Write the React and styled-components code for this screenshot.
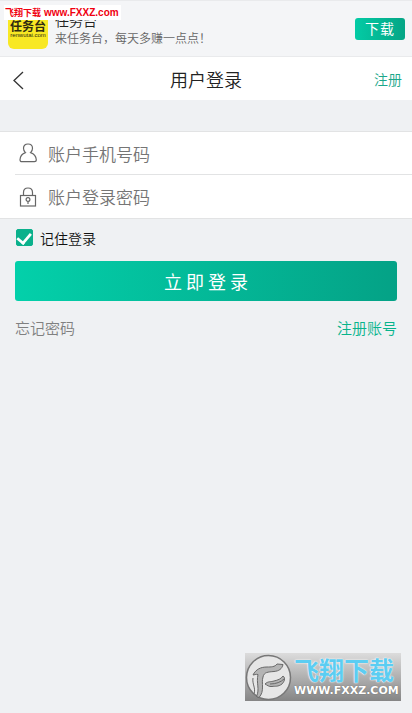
import React, { useState } from "react";
import styled, { createGlobalStyle } from "styled-components";

const App = () => {
  const [phone, setPhone] = useState("");
  const [password, setPassword] = useState("");
  const [remember, setRemember] = useState(true);

  return (
    <>
      <GlobalStyle />
      <Page>
        <Banner>
          <AppLogo>
            <LogoName>任务台</LogoName>
            <LogoUrl>renwutai.com</LogoUrl>
          </AppLogo>
          <BannerText>
            <BannerTitle>任务台</BannerTitle>
            <BannerDesc>来任务台，每天多赚一点点！</BannerDesc>
          </BannerText>
          <DownloadBtn type="button">下载</DownloadBtn>
          <SiteTag>
            <TagName>飞翔下载</TagName>
            <TagUrl>www.FXXZ.com</TagUrl>
          </SiteTag>
        </Banner>

        <Header>
          <BackBtn type="button" aria-label="返回">
            <svg width="12" height="22" viewBox="0 0 12 22" fill="none">
              <path d="M11 4 2 12.500l9 8.500" stroke="#333" strokeWidth="1.300" />
            </svg>
          </BackBtn>
          <Title>用户登录</Title>
          <HeaderLink href="#register">注册</HeaderLink>
        </Header>

        <form onSubmit={(e) => e.preventDefault()}>
          <Fields>
            <Field>
              <UserIcon />
              <Input
                type="tel"
                aria-label="账户手机号码"
                placeholder="账户手机号码"
                value={phone}
                onChange={(e) => setPhone(e.target.value)}
              />
            </Field>
            <Field>
              <LockIcon />
              <Input
                type="password"
                aria-label="账户登录密码"
                placeholder="账户登录密码"
                value={password}
                onChange={(e) => setPassword(e.target.value)}
              />
            </Field>
          </Fields>
          <Actions>
            <Remember>
              <Checkbox
                type="checkbox"
                checked={remember}
                onChange={(e) => setRemember(e.target.checked)}
              />
              记住登录
            </Remember>
            <SubmitBtn type="submit">立即登录</SubmitBtn>
            <Links>
              <TextLink href="#forgot" $color="#808080">忘记密码</TextLink>
              <TextLink href="#register" $color="#07b48c">注册账号</TextLink>
            </Links>
          </Actions>
        </form>

        <Watermark>
          <BirdLogo />
          <MarkText>
            <MarkName>飞翔下载</MarkName>
            <MarkUrl>WWW.FXXZ.COM</MarkUrl>
          </MarkText>
        </Watermark>
      </Page>
    </>
  );
};

export default App;

const UserIcon = () => (
  <svg width="20" height="20" viewBox="0 0 20 20" fill="none" stroke="#666" strokeWidth="1.2">
    <path d="M7.4 9.6C6 8.4 5.5 7 5.5 5.3 5.5 2.7 7.4 1 10 1s4.5 1.7 4.5 4.3c0 1.7-.5 3.1-1.900 4.300 3.800 1.300 5.500 3.900 5.700 7.200 0 1.300-.7 1.900-1.900 1.900H3.900c-1.200 0-1.900-.6-1.900-1.900.2-3.300 1.600-5.900 5.400-7.200Z" />
  </svg>
);

const LockIcon = () => (
  <svg width="20" height="20" viewBox="0 0 20 20" fill="none" stroke="#666" strokeWidth="1.2">
    <rect x="2.5" y="8.5" width="15" height="10.5" />
    <path d="M5.500 8.500V5.500C5.500 2.800 7.300 1 10 1s4.500 1.800 4.500 4.500v3" />
    <circle cx="10" cy="12.500" r="1.900" />
    <path d="M10 14.400v2.600" />
  </svg>
);

const BirdLogo = () => (
  <svg width="47" height="47" viewBox="0 0 47 47">
    <circle cx="23.5" cy="23.5" r="22" fill="#e6e6e6" stroke="#777" strokeWidth="1.5" />
    <g fill="#b4b4b4" stroke="#686868" strokeWidth="1" strokeLinejoin="round">
      <path d="M8 21C11 15 16 13 22 13C26 13 30 13 32 10L38 10.500C37 15 34 17 29 17.500C23 18 19 18 18 23C16 29 20 37 14 43.500L11.500 42.500C15 35 11 29 13 20.500C11 20 9 21 8 21Z" />
      <path d="M8 24C7 30 11 34 9 40" fill="none" />
      <path d="M20 30C23 27 26 28 29 27C33 26 36 25 38 22C41 24 39 28 37 30C33 33 30 32 27 32.500C24 33 22 31 20 30Z" />
      <path d="M25 30C31 30 36 28 39 25" fill="none" />
    </g>
  </svg>
);

const GlobalStyle = createGlobalStyle`
  * {
    box-sizing: border-box;
  }
  body {
    margin: 0;
    background: #eff1f3;
    font-family: "Noto Sans CJK SC", sans-serif;
    font-weight: 350;
  }
  button, input {
    font-family: inherit;
    font-weight: inherit;
  }
  a {
    text-decoration: none;
  }
`;

const Page = styled.main`
  position: relative;
  min-height: 100vh;
`;

const Banner = styled.section`
  position: relative;
  display: flex;
  align-items: center;
  height: 57px;
  padding: 0 7px 0 8px;
  background: #f4f5f7;
  border: solid #e9eaec;
  border-width: 1px 0;
`;

const AppLogo = styled.div`
  display: flex;
  flex-direction: column;
  align-items: center;
  justify-content: center;
  width: 40px;
  height: 40px;
  margin-right: 7px;
  border-radius: 6px;
  background: #f8e824;
  color: #2f2b10;
`;

const LogoName = styled.span`
  font-size: 12px;
  font-weight: 700;
  line-height: 12px;
`;

const LogoUrl = styled.span`
  font-family: "Liberation Sans", sans-serif;
  font-size: 6px;
  line-height: 6px;
`;

const BannerText = styled.div`
  flex: 1;
`;

const BannerTitle = styled.div`
  color: #222;
  font-size: 14px;
  line-height: 18px;
`;

const BannerDesc = styled.div`
  color: #666;
  font-size: 12px;
  line-height: 18px;
`;

const DownloadBtn = styled.button`
  width: 50px;
  height: 22px;
  padding: 0 0 2px;
  border: 0;
  border-radius: 3px;
  background: linear-gradient(to right, #03cba5, #05a585);
  color: #fff;
  font-size: 14px;
  font-weight: 400;
  line-height: 20px;
  letter-spacing: 1px;
`;

const SiteTag = styled.div`
  position: absolute;
  top: 4px;
  left: 4px;
  display: flex;
  align-items: center;
  gap: 3px;
  height: 15px;
  padding: 0 2px 0 1px;
  background: #fff;
  color: #f00010;
  font-weight: 700;
`;

const TagName = styled.span`
  font-size: 9px;
`;

const TagUrl = styled.span`
  font-family: "Liberation Sans", sans-serif;
  font-size: 10px;
`;

const Header = styled.header`
  display: grid;
  grid-template-columns: 60px 1fr 60px;
  align-items: center;
  height: 43px;
  background: #fff;
`;

const BackBtn = styled.button`
  display: flex;
  padding: 4px 12px;
  border: 0;
  background: none;
`;

const Title = styled.h1`
  margin: 0;
  color: #222;
  font-size: 18px;
  font-weight: 350;
  text-align: center;
`;

const HeaderLink = styled.a`
  padding-right: 10px;
  color: #1ba78a;
  font-size: 14px;
  text-align: right;
`;

const Fields = styled.div`
  margin-top: 31px;
  padding-left: 15px;
  border: solid #e2e3e4;
  border-width: 1px 0;
  background: #fff;
`;

const Field = styled.div`
  display: flex;
  align-items: center;
  gap: 10px;
  height: 43px;
  padding-left: 3px;

  &:not(:last-child) {
    border-bottom: 1px solid #e2e3e4;
  }
`;

const Input = styled.input`
  flex: 1;
  min-width: 0;
  height: 40px;
  padding: 0;
  border: 0;
  outline: 0;
  background: none;
  color: #333;
  font-size: 17px;

  &::placeholder {
    color: #757575;
  }
`;

const Actions = styled.div`
  padding: 0 15px;
`;

const Remember = styled.label`
  display: flex;
  align-items: center;
  gap: 7px;
  height: 37px;
  color: #111;
  font-size: 14px;
`;

const Checkbox = styled.input`
  appearance: none;
  width: 17px;
  height: 17px;
  margin: 0 0 0 1px;
  border: 1px solid #0bb18c;
  border-radius: 2px;
  background: #fff;

  &:checked {
    background: #0bb18c;
  }
  &:checked::after {
    content: "";
    display: block;
    width: 7px;
    height: 12px;
    margin: 0 auto;
    border: solid #fff;
    border-width: 0 3px 3px 0;
    transform: rotate(40deg) scale(0.9);
    transform-origin: 50% 40%;
  }
`;

const SubmitBtn = styled.button`
  display: block;
  width: 100%;
  height: 40px;
  margin-top: 5px;
  padding: 0 0 0 4px;
  border: 0;
  border-radius: 3px;
  background: linear-gradient(to right, #03d0aa, #04a286);
  color: #fff;
  font-size: 18px;
  font-weight: 400;
  letter-spacing: 4px;
`;

const Links = styled.div`
  display: flex;
  justify-content: space-between;
  margin-top: 16px;
`;

const TextLink = styled.a`
  color: ${(props) => props.$color};
  font-size: 15px;
  line-height: 22px;
`;

const Watermark = styled.div`
  position: absolute;
  right: 11px;
  bottom: 12px;
  display: flex;
  align-items: center;
  width: 156px;
  height: 48px;
  background: linear-gradient(#dcdcdc, #858585);

  svg {
    flex-shrink: 0;
  }
`;

const MarkText = styled.div`
  flex: 1;
  margin-left: 2px;
`;

const MarkName = styled.div`
  color: #5ccdf2;
  font-size: 25px;
  font-weight: 700;
  line-height: 28px;
  text-shadow: 0 0 2px #fff, 0 0 1px #fff;
`;

const MarkUrl = styled.div`
  color: #fff;
  font-family: "DejaVu Sans", sans-serif;
  font-size: 11px;
  font-weight: 700;
  line-height: 16px;
  text-shadow: 0 0 1px #555;
`;
